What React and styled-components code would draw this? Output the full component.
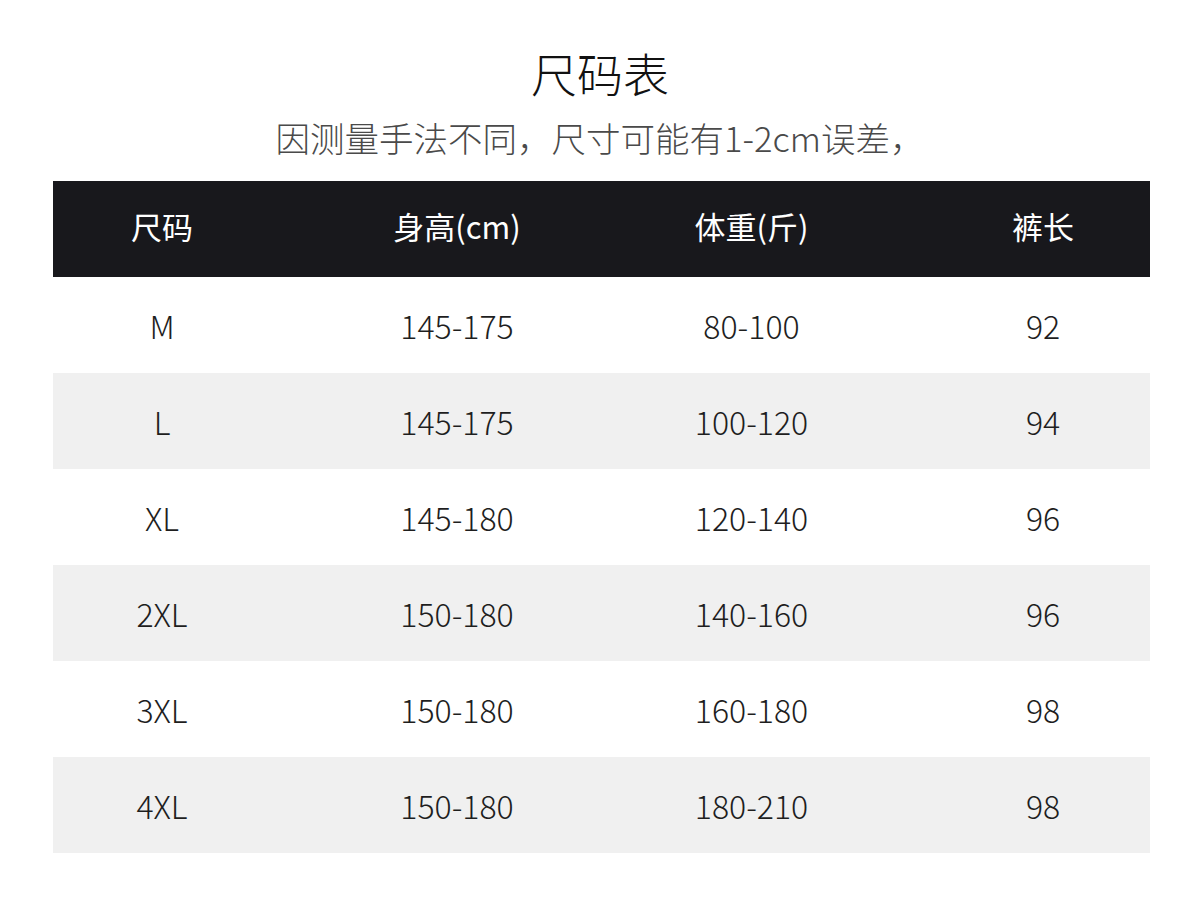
import React from "react";
import styled, { createGlobalStyle } from "styled-components";

const Global = createGlobalStyle`
  html, body { margin: 0; padding: 0; background: #fff; }
  body { font-family: "Noto Sans CJK SC", "Noto Sans", sans-serif; }
`;

const Page = styled.div`
  width: 1200px;
  height: 902px;
  display: flex;
  flex-direction: column;
  align-items: center;
  padding-top: 41px;
  box-sizing: border-box;
`;

const Title = styled.h1`
  margin: 0;
  font-size: 46px;
  font-weight: 300;
  line-height: 62px;
  color: #111;
`;

const Subtitle = styled.p`
  margin: 11px 0 0;
  font-size: 34.5px;
  font-weight: 300;
  line-height: 46px;
  color: #4a4a4a;
`;

const Table = styled.div`
  margin-top: 21px;
  width: 1097px;
  margin-left: 2px;
  display: flex;
  flex-direction: column;
`;

const Row = styled.div`
  display: grid;
  grid-template-columns: 219px 219px 218px 1fr;
  column-gap: 76px;
  height: 96px;
  align-items: center;
  background: ${(p) => (p.$head ? "#18181c" : p.$shade ? "#f0f0f0" : "#fff")};
  color: ${(p) => (p.$head ? "#fff" : "#1e1e1e")};
`;

const Cell = styled.div`
  text-align: center;
  font-size: ${(p) => (p.$head ? "31px" : "32px")};
  font-weight: ${(p) => (p.$head ? 400 : 300)};
  line-height: 40px;
  margin-top: ${(p) => (p.$head ? "-6px" : "-1px")};
`;

const rows = [
  ["M", "145-175", "80-100", "92"],
  ["L", "145-175", "100-120", "94"],
  ["XL", "145-180", "120-140", "96"],
  ["2XL", "150-180", "140-160", "96"],
  ["3XL", "150-180", "160-180", "98"],
  ["4XL", "150-180", "180-210", "98"],
];

export default function App() {
  return (
    <Page>
      <Global />
      <Title>尺码表</Title>
      <Subtitle>因测量手法不同，尺寸可能有1-2cm误差，</Subtitle>
      <Table>
        <Row $head>
          <Cell $head>尺码</Cell>
          <Cell $head>身高(cm)</Cell>
          <Cell $head>体重(斤)</Cell>
          <Cell $head>裤长</Cell>
        </Row>
        {rows.map((r, i) => (
          <Row key={i} $shade={i % 2 === 1}>
            {r.map((c, j) => (
              <Cell key={j}>{c}</Cell>
            ))}
          </Row>
        ))}
      </Table>
    </Page>
  );
}
